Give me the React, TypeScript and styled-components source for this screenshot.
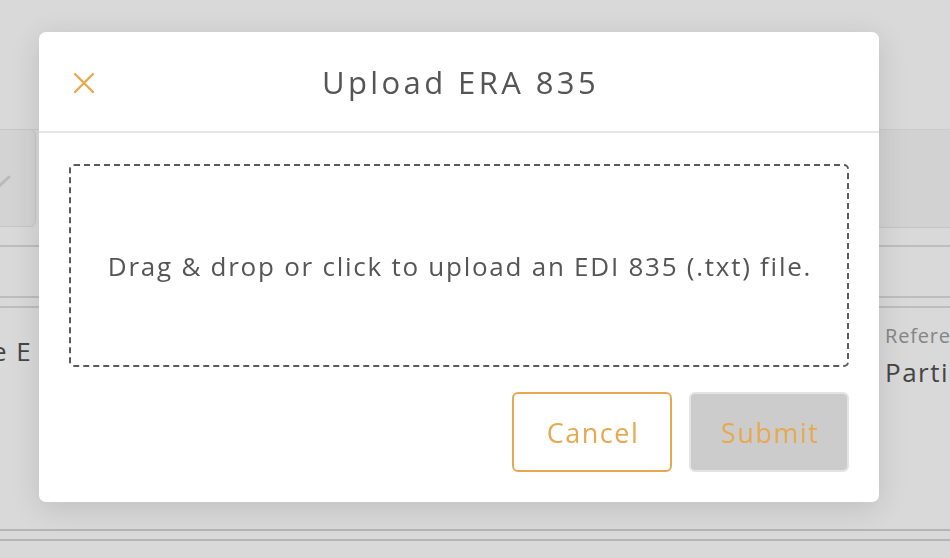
import React from "react";
import styled, { createGlobalStyle } from "styled-components";

const GlobalStyle = createGlobalStyle`
  html, body { margin: 0; padding: 0; }
  body {
    background: #d9d9d9;
    font-family: "Open Sans", Lato, sans-serif;
    overflow: hidden;
  }
  * { box-sizing: border-box; }
`;

const Page = styled.div`
  width: 950px;
  height: 558px;
  overflow: hidden;
  background: #d9d9d9;
  display: flex;
  flex-direction: column;
`;

const TopArea = styled.div`
  height: 130px;
  flex-shrink: 0;
  border-bottom: 1px solid #cbcbcb;
`;

const Toolbar = styled.div`
  height: 98px;
  flex-shrink: 0;
  display: flex;
  justify-content: space-between;
`;

const EditButton = styled.div`
  width: 36px;
  height: 98px;
  margin-top: -1px;
  background: #d3d3d3;
  border: 1px solid #c6c6c6;
  border-left: none;
  border-radius: 0 6px 6px 0;
  display: flex;
  align-items: center;
`;

const ToolbarBlock = styled.div`
  width: 72px;
  background: #d2d2d2;
  border-bottom: 1px solid #c4c4c4;
`;

const Spacer = styled.div<{ $h: number }>`
  height: ${(p) => p.$h}px;
  flex-shrink: 0;
  border-bottom: 2px solid #bdbdbd;
`;

const DoubleRule = styled.div`
  height: 12px;
  flex-shrink: 0;
  border-top: 2px solid #bdbdbd;
  border-bottom: 2px solid #bdbdbd;
  margin-top: 49px;
`;

const InfoRow = styled.div`
  height: 223px;
  flex-shrink: 0;
  display: flex;
  justify-content: space-between;
  padding-top: 12px;
  border-bottom: 2px solid #b5b5b5;
`;

const LeftValue = styled.div`
  margin-top: 13px;
  margin-left: -8px;
  font-size: 26px;
  letter-spacing: 1.5px;
  color: #454545;
  white-space: nowrap;
`;

const RightCol = styled.div`
  width: 65px;
  display: flex;
  flex-direction: column;
  white-space: nowrap;
  overflow: hidden;
`;

const Label = styled.div`
  font-size: 20px;
  letter-spacing: 0.8px;
  color: #858585;
  line-height: 24px;
  margin-top: 4px;
`;

const Value = styled.div`
  font-size: 26px;
  letter-spacing: 1.5px;
  color: #454545;
  line-height: 34px;
  margin-top: 7px;
`;

const BottomRule = styled.div`
  height: 10px;
  flex-shrink: 0;
  border-bottom: 2px solid #b5b5b5;
`;

const Overlay = styled.div`
  position: fixed;
  inset: 0;
  padding: 32px 0 0 39px;
`;

const Modal = styled.div`
  width: 840px;
  height: 470px;
  background: #ffffff;
  border-radius: 7px;
  box-shadow: 0 6px 30px rgba(0, 0, 0, 0.12);
  display: flex;
  flex-direction: column;
`;

const Header = styled.div`
  height: 101px;
  position: relative;
  display: flex;
  align-items: center;
  justify-content: center;
  border-bottom: 2px solid #e6e6e6;
`;

const CloseButton = styled.button`
  position: absolute;
  left: 30px;
  top: 36px;
  width: 30px;
  height: 30px;
  border: none;
  background: transparent;
  padding: 0;
  display: flex;
  align-items: center;
  justify-content: center;
  cursor: pointer;
`;

const Title = styled.h1`
  margin: 0 0 0 3px;
  font-weight: 400;
  font-size: 31px;
  color: #555555;
  letter-spacing: 3.4px;
`;

const Body = styled.div`
  flex: 1;
  display: flex;
  flex-direction: column;
  padding: 31px 30px 30px 30px;
`;

const DropZone = styled.div`
  height: 203px;
  border: 2px dashed #5a5a5a;
  border-radius: 5px;
  display: flex;
  align-items: center;
  justify-content: center;
  font-size: 26px;
  letter-spacing: 1.75px;
  padding-left: 2px;
  color: #555555;
  cursor: pointer;
`;

const Actions = styled.div`
  margin-top: 25px;
  display: flex;
  justify-content: flex-end;
  gap: 17px;
`;

const Button = styled.button<{ $variant: "outline" | "disabled" }>`
  width: 160px;
  height: 80px;
  border-radius: 6px;
  font-family: inherit;
  font-size: 27px;
  letter-spacing: 1.5px;
  padding: 0 0 0 2px;
  color: #e8a84f;
  border: 2px solid ${(p) => (p.$variant === "outline" ? "#e8a84f" : "#e4e4e4")};
  background: ${(p) => (p.$variant === "outline" ? "#ffffff" : "#cccccc")};
  cursor: ${(p) => (p.$variant === "outline" ? "pointer" : "default")};
`;

export default function App() {
  return (
    <>
      <GlobalStyle />
      <Page>
        <TopArea />
        <Toolbar>
          <EditButton>
            <svg width="12" height="30" viewBox="0 0 12 30">
              <path d="M-2 24 L9 14" stroke="#b9b9b9" strokeWidth="3" strokeLinecap="round" />
            </svg>
          </EditButton>
          <ToolbarBlock />
        </Toolbar>
        <Spacer $h={19} />
        <DoubleRule />
        <InfoRow>
          <LeftValue>e E</LeftValue>
          <RightCol>
            <Label>Reference</Label>
            <Value>Partial</Value>
          </RightCol>
        </InfoRow>
        <BottomRule />
      </Page>
      <Overlay>
        <Modal>
          <Header>
            <CloseButton aria-label="Close">
              <svg width="22" height="22" viewBox="0 0 22 22">
                <path d="M2 2 L20 20 M20 2 L2 20" stroke="#e8a84f" strokeWidth="2.4" strokeLinecap="round" />
              </svg>
            </CloseButton>
            <Title>Upload ERA 835</Title>
          </Header>
          <Body>
            <DropZone>Drag &amp; drop or click to upload an EDI 835 (.txt) file.</DropZone>
            <Actions>
              <Button $variant="outline">Cancel</Button>
              <Button $variant="disabled" disabled>
                Submit
              </Button>
            </Actions>
          </Body>
        </Modal>
      </Overlay>
    </>
  );
}
